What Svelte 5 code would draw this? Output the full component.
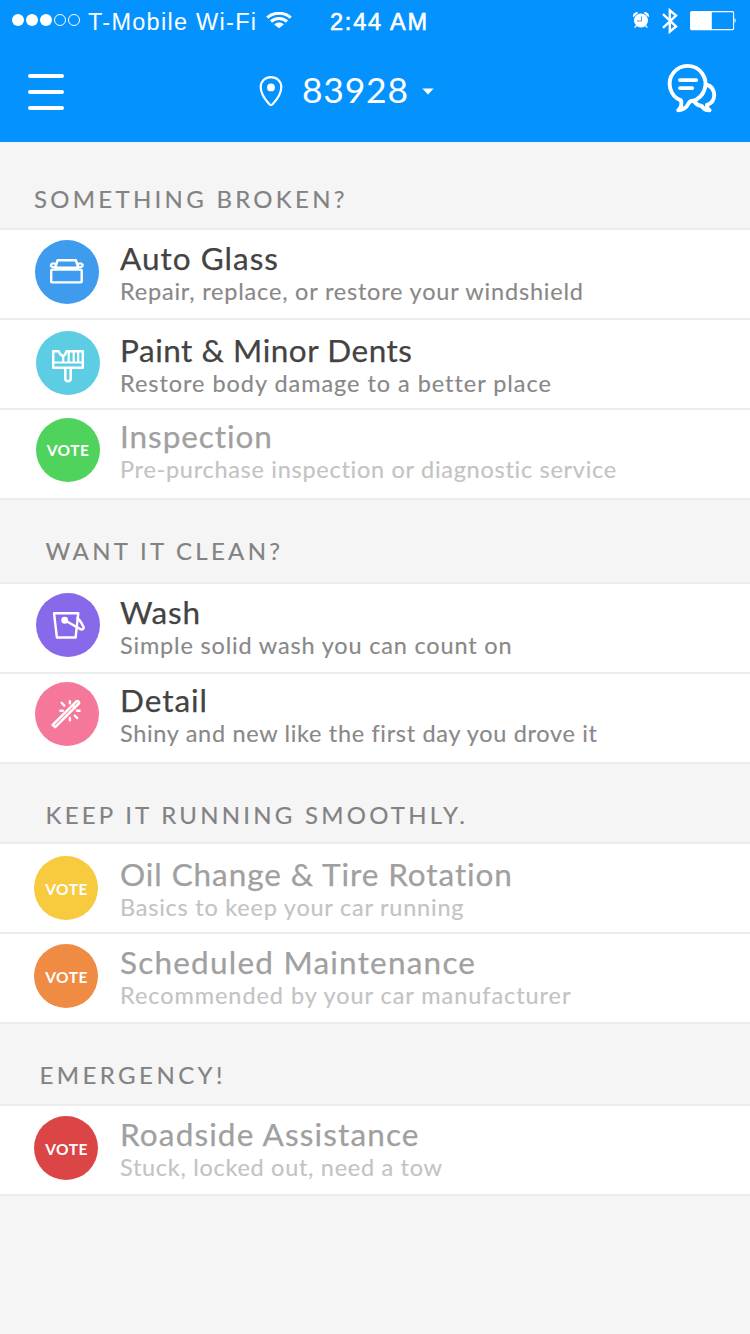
<script>
  const sections = [
    {
      title: 'SOMETHING BROKEN?', height: 88, top: 42, left: 34, width: 310.5,
      rows: [
        { title: 'Auto Glass', tw: 158, sub: 'Repair, replace, or restore your windshield', sw: 463, color: '#3e9bee', icon: 'car', x: 34.5, y: 10, t: 10 },
        { title: 'Paint & Minor Dents', tw: 292, sub: 'Restore body damage to a better place', sw: 430, color: '#5ccde2', icon: 'brush', x: 36, y: 11.3, t: 12 },
        { title: 'Inspection', tw: 152.5, sub: 'Pre-purchase inspection or diagnostic service', sw: 497, color: '#4fd35c', icon: 'vote', x: 36, y: 8, t: 8, dim: true, vx: 0, vy: 0 }
      ]
    },
    {
      title: 'WANT IT CLEAN?', height: 84, top: 36, left: 45.5, width: 234.5,
      rows: [
        { title: 'Wash', tw: 80, sub: 'Simple solid wash you can count on', sw: 391.5, color: '#8769e9', icon: 'bucket', x: 36, y: 9.3, t: 10 },
        { title: 'Detail', tw: 87, sub: 'Shiny and new like the first day you drove it', sw: 476.5, color: '#f5789a', icon: 'wand', x: 34.5, y: 8, t: 8 }
      ]
    },
    {
      title: 'KEEP IT RUNNING SMOOTHLY.', height: 80, top: 36, left: 45.5, width: 419.5,
      rows: [
        { title: 'Oil Change & Tire Rotation', tw: 392.5, sub: 'Basics to keep your car running', sw: 343.5, color: '#f8ca3e', icon: 'vote', x: 34, y: 12, t: 12, dim: true, vx: 1, vy: 1 },
        { title: 'Scheduled Maintenance', tw: 355, sub: 'Recommended by your car manufacturer', sw: 450.5, color: '#f08b44', icon: 'vote', x: 34, y: 10, t: 10, dim: true, vx: 1, vy: 1 }
      ]
    },
    {
      title: 'EMERGENCY!', height: 82, top: 36, left: 39.5, width: 183,
      rows: [
        { title: 'Roadside Assistance', tw: 298.5, sub: 'Stuck, locked out, need a tow', sw: 322, color: '#dc4546', icon: 'vote', x: 34, y: 10, t: 10, dim: true, vx: 1, vy: 1 }
      ]
    }
  ];

  // Tracks a single line of text so that it spans the given width.
  function track(node, width) {
    node.style.letterSpacing = '0px';
    const natural = node.getBoundingClientRect().width;
    const gaps = node.textContent.length - 1;
    node.style.letterSpacing = `${(width - natural) / gaps}px`;
  }
</script>

<main>
  <header>
    <div class="status">
      <svg class="signal" width="70" height="14" viewBox="0 0 70 14">
        <g fill="#fff"><circle cx="7" cy="7" r="6" /><circle cx="21" cy="7" r="6" /><circle cx="35" cy="7" r="6" /></g>
        <g fill="none" stroke="#fff"><circle cx="49" cy="7" r="5.5" /><circle cx="63" cy="7" r="5.5" /></g>
      </svg>
      <div class="carrier"><span use:track={168}>T-Mobile Wi-Fi</span></div>
      <svg class="wifi" width="26" height="17" viewBox="0 0 26 17">
        <g fill="none" stroke="#fff" stroke-width="3.1">
          <path d="M1.2 5.6C8 -.2 18 -.2 24.8 5.6" />
          <path d="M5 9.5c4.6-4 11.4-4 16 0" />
        </g>
        <path fill="#fff" d="M8.2 12.4c2.8-2.5 6.8-2.5 9.6 0L13 16.3z" />
      </svg>
      <div class="time"><span use:track={97}>2:44 AM</span></div>
      <div class="indicators">
        <svg width="18" height="18" viewBox="0 0 18 18">
          <g fill="#fff">
            <circle cx="9" cy="9.5" r="7" />
            <path d="M1.3 6.3C0 3.1 3.3.2 6.4 1.7zM16.7 6.3C18 3.1 14.7.2 11.6 1.7z" />
          </g>
          <path d="M4.5 14.5 2.6 16.6M13.5 14.5l1.9 2.1" stroke="#fff" stroke-width="1.3" />
          <path d="M9.500 5.500v4.500H5" fill="none" stroke="#0492ff" stroke-width=".8" />
        </svg>
        <svg class="bluetooth" width="18" height="28" viewBox="0 0 18 28">
          <path d="m2 7.200 13 12.300-6.200 5.200V3.300L15 8.500 2 20.800" fill="none" stroke="#fff" stroke-width="2.400" />
        </svg>
        <svg class="battery" width="46" height="20" viewBox="0 0 46 20">
          <rect x=".6" y=".6" width="43" height="18" rx="1.2" fill="none" stroke="#fff" stroke-width="1.1" />
          <path fill="#fff" d="M1 1h20.800v17.200H1z" />
          <path fill="#fff" opacity=".7" d="M44.300 7.200q1.700.3 1.700 2.300t-1.700 2.400z" />
        </svg>
      </div>
    </div>
    <nav>
      <svg class="menu" width="36" height="36" viewBox="0 0 36 36">
        <path d="M2 2h32M2 18h32M2 34h32" stroke="#fff" stroke-width="4" stroke-linecap="round" />
      </svg>
      <div class="place">
        <svg width="24" height="32" viewBox="0 0 24 32">
          <path d="M12 2.100C6 2.100 1.700 6.400 1.700 12c0 6.600 4.700 13 8.700 17.300q1.600 1.600 3.200 0C17.600 25 22.300 18.600 22.300 12 22.300 6.400 18 2.100 12 2.100z" fill="none" stroke="#fff" stroke-width="2.200" />
          <circle cx="12" cy="12.400" r="3.900" fill="#fff" />
        </svg>
        <div class="zip"><span use:track={106}>83928</span></div>
        <svg class="caret" width="12" height="7" viewBox="0 0 12 7"><path d="M.3.4h11.400L6 6.400z" fill="#fff" /></svg>
      </div>
      <svg class="chat" width="56" height="56" viewBox="0 0 56 56">
        <g fill="none" stroke="#fff" stroke-width="3.900" stroke-linecap="round" stroke-linejoin="round">
          <path d="M17 40.400A17.900 17.900 0 1 1 29 40.800Q25.700 40.900 24.500 43.500 21.500 49.800 14.200 50.200 18.600 46.500 17 40.400z" />
          <path d="M43.300 25C48.300 26.200 50.300 31.600 50.200 35.500 50 40.400 46.800 43.700 43 44.800Q42.600 48.500 45.600 50.200 40 50.300 37.800 46 33.200 45.600 30.200 41.500" />
          <path d="M16 20.100h16.200M16 28.100h12.200" />
        </g>
      </svg>
    </nav>
  </header>

  {#each sections as s}
    <section>
      <h2 style:height="{s.height}px" style:padding="{s.top}px 0 0 {s.left}px"><span use:track={s.width}>{s.title}</span></h2>
      {#each s.rows as r}
        <article class:dim={r.dim}>
          <div class="slot" style:padding="{r.y}px 0 0 {r.x}px">
            <div class="badge" style:background={r.color}>
              {#if r.icon === 'vote'}
                <div class="vote" style:padding="{r.vy}px 0 0 {r.vx}px"><span use:track={42}>VOTE</span></div>
              {:else}
                <svg width="64" height="64" viewBox="0 0 64 64" fill="none" stroke="#fff" stroke-width="2.500" stroke-linecap="round" stroke-linejoin="round">
                  {#if r.icon === 'car'}
                    <rect x="16.200" y="29.600" width="30.500" height="12.800" rx=".8" stroke-width="2.400" />
                    <path d="M20.300 27.300 22.600 20.300h18.200l2.600 7M20.500 27.900h22.500" stroke-width="2.600" />
                    <path d="M20 23.800c-2.500-.8-4.200 0-4.200 1.400s1.500 1.900 3 1.900M43.500 23.800c2.500-.8 4.200 0 4.200 1.400s-1.500 1.900-3 1.900" stroke-width="2.200" />
                  {:else if r.icon === 'brush'}
                    <path d="M17.200 36.700V20.200h5.300Q23.600 23.500 27 25.400 29.600 23.600 30.500 20.200H46.800V36.700z" />
                    <path d="M17.200 31.500h29.600M27.200 25.400V31M32.700 20.200V31M37.700 20.200V31M42.200 20.200V31" stroke-width="2.200" />
                    <path d="M29.300 37v10.500c0 3.600 5.400 3.600 5.400 0V37" />
                  {:else if r.icon === 'bucket'}
                    <path d="M18 20.200h24.300L39.600 44.500H20.900z" stroke-width="2.400" />
                    <circle cx="28.700" cy="27.300" r="2.200" fill="#fff" />
                    <path d="M30 28 43.500 35.700C46.500 37.400 48.500 35.700 47.200 33.300Q45 28.500 41.500 25" />
                  {:else}
                    <path d="M17.700 42.800 41.700 19.200Q43.300 18.500 44.200 21.200L20.200 45.200zM37.600 23.300l2.400 2.500" stroke-width="2.500" />
                    <path d="m26.700 20.800 2.600 2.900M34.900 19.300v2M25.300 28.700h2.500M42 28.700h2.600M34.900 36v2.300M39.700 33.500l2.500 2.600" stroke-width="2.400" />
                  {/if}
                </svg>
              {/if}
            </div>
          </div>
          <div class="copy" style:padding-top="{r.t}px">
            <h3><span use:track={r.tw}>{r.title}</span></h3>
            <p><span use:track={r.sw}>{r.sub}</span></p>
          </div>
        </article>
      {/each}
    </section>
  {/each}
</main>

<style>
  :global(body) { background: #f5f5f5; }
  main {
    width: 750px;
    height: 1334px;
    overflow: hidden;
    background: #f5f5f5;
    font-family: Lato, sans-serif;
  }
  main :global(*) { box-sizing: border-box; }
  svg { display: block; flex: none; }
  span { display: inline-block; white-space: nowrap; }
  header { height: 142px; background: #0492ff; color: #fff; }
  .status {
    display: flex;
    align-items: center;
    height: 42px;
    padding: 0 14px 0 11px;
    font: 23.5px/42px "Liberation Sans", Arial, sans-serif;
  }
  .signal { margin-top: -2px; }
  .carrier { width: 169px; margin-left: 7px; padding-top: 2px; }
  .wifi { margin: -2px 0 0 9px; }
  .time { width: 98px; margin-left: 38px; padding-top: 2px; -webkit-text-stroke: .6px #fff; }
  .indicators { display: flex; align-items: center; margin-left: auto; margin-top: -2px; }
  .indicators svg:first-child { margin-right: -1px; }
  .bluetooth { margin: 2px 0 0 12px; }
  .battery { margin: 1px 0 0 11px; }
  nav { display: flex; height: 100px; }
  .menu { margin: 32px 0 0 28px; }
  .place { display: flex; margin-left: 195px; padding-top: 33px; }
  .zip { width: 107px; margin: -7px 0 0 19px; font-size: 35.5px; line-height: 44px; }
  .caret { margin: 13px 0 0 13px; }
  .chat { margin: 18px 30px 0 auto; }
  h2, h3, p { margin: 0; font-weight: 400; }
  h2 {
    border-bottom: 2px solid #ececec;
    color: #828282;
    font-size: 24px;
    line-height: 30px;
    -webkit-text-stroke: .15px #828282;
  }
  article {
    display: flex;
    height: 90px;
    border-bottom: 2px solid #ececec;
    background: #fff;
  }
  .slot { flex: none; width: 120px; }
  .badge { width: 64px; height: 64px; border-radius: 50%; }
  .vote {
    display: flex;
    justify-content: center;
    color: #fff;
    font-size: 15.5px;
    font-weight: 700;
    line-height: 64px;
  }
  h3 { color: #434343; font-size: 31.5px; line-height: 36px; height: 36px; -webkit-text-stroke: .25px currentColor; }
  p { color: #888; font-size: 23.5px; line-height: 30px; -webkit-text-stroke: .15px currentColor; }
  .dim h3 { color: #a0a0a0; }
  .dim p { color: #c3c3c3; }
</style>
